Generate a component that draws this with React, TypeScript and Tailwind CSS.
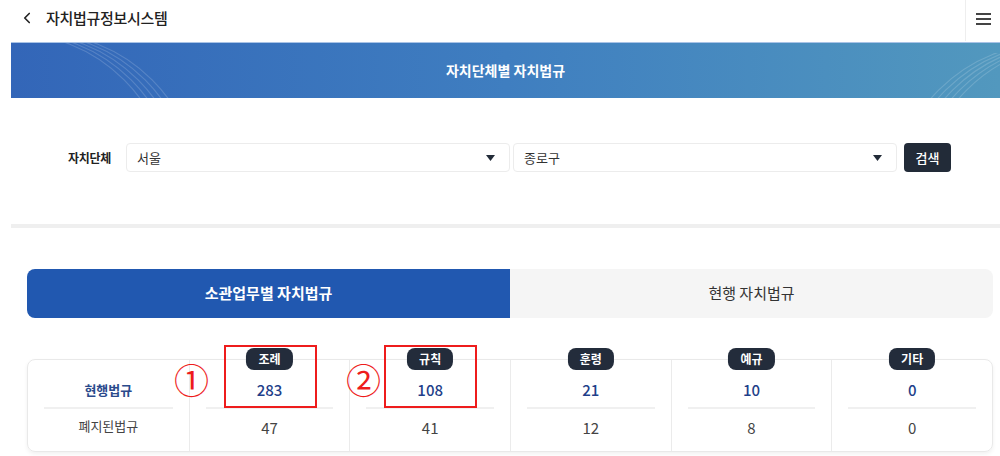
import { ChevronLeft } from "lucide-react";

const font = { fontFamily: '"Noto Sans CJK KR", "Noto Sans", sans-serif' };

const stats = [
  { name: "조례", current: 283, repealed: 47 },
  { name: "규칙", current: 108, repealed: 41 },
  { name: "훈령", current: 21, repealed: 12 },
  { name: "예규", current: 10, repealed: 8 },
  { name: "기타", current: 0, repealed: 0 },
];

function Arcs({ className }: { className: string }) {
  return (
    <svg className={className} viewBox="0 0 200 56" fill="none">
      {[0, 7, 14, 21, 28].map((d) => (
        <circle
          key={d}
          cx={-20 + d}
          cy={150}
          r={160}
          stroke="white"
          strokeOpacity="0.16"
          strokeWidth="1.2"
        />
      ))}
    </svg>
  );
}

function Select({ value }: { value: string }) {
  return (
    <div className="flex h-[29px] w-[384px] items-center justify-between rounded-[4px] border border-[#ececec] bg-white pl-[10px] pr-[14px]">
      <span className="text-[13px] text-[#333]">{value}</span>
      <svg width="9" height="6" viewBox="0 0 9 6">
        <path d="M0 0h9L4.5 6z" fill="#222b38" />
      </svg>
    </div>
  );
}

export default function App() {
  return (
    <div className="h-[456px] w-[1000px] overflow-hidden bg-white" style={font}>
      {/* Header */}
      <header className="flex h-[41px] items-stretch">
        <div className="flex flex-1 items-center pb-[5px] pl-[18px]">
          <ChevronLeft size={18} strokeWidth={2.2} className="text-[#222]" />
          <span className="ml-[10px] text-[15px] font-medium tracking-[-0.3px] text-[#222]">
            자치법규정보시스템
          </span>
        </div>
        <div className="flex w-[35px] items-center justify-center border-l border-[#eeeeee] pb-[4px]">
          <div className="flex w-[15px] flex-col gap-[3px]">
            <span className="h-[2px] bg-[#444]" />
            <span className="h-[2px] bg-[#444]" />
            <span className="h-[2px] bg-[#444]" />
          </div>
        </div>
      </header>

      <main className="ml-[11px]">
        {/* Banner */}
        <div className="relative mt-[1px] flex h-[56px] items-center justify-center overflow-hidden border-t border-[#a9c3e6] bg-gradient-to-r from-[#3366b8] via-[#3f7ec0] to-[#5298be]">
          <Arcs className="absolute left-[20px] top-0 h-[56px] w-[200px]" />
          <Arcs className="absolute right-[-60px] top-[10px] h-[56px] w-[200px] scale-x-[-1]" />
          <span className="relative text-[14px] font-bold text-white">자치단체별 자치법규</span>
        </div>

        {/* Search */}
        <div className="flex items-center pt-[45px]">
          <span className="ml-[57px] mr-[15px] w-[43px] whitespace-nowrap text-[12px] font-bold tracking-[-0.3px] text-[#222]">
            자치단체
          </span>
          <div className="flex gap-[3px]">
            <Select value="서울" />
            <Select value="종로구" />
          </div>
          <button className="ml-[7px] h-[29px] w-[47px] rounded-[4px] bg-[#222b38] text-[13px] font-medium text-white">
            검색
          </button>
        </div>

        <div className="mt-[52px] h-[4px] bg-[#efefef]" />

        {/* Tabs */}
        <div className="ml-[16px] mt-[41px] flex h-[49px] w-[966px]">
          <div className="flex flex-1 items-center justify-center rounded-l-[8px] bg-[#2158b0] text-[15px] font-bold text-white">
            소관업무별 자치법규
          </div>
          <div className="flex flex-1 items-center justify-center rounded-r-[8px] bg-[#f5f5f5] text-[15px] text-[#333]">
            현행 자치법규
          </div>
        </div>

        {/* Stats table */}
        <div className="relative ml-[16px] mt-[41px] grid w-[966px] grid-cols-6 rounded-[8px] border border-[#e9e9e9] shadow-[0_2px_4px_rgba(0,0,0,0.06)]">
          <div className="flex flex-col">
            <div className="h-[47px] pt-[21px] text-center text-[13px] font-bold leading-[18px] text-[#2a4a8c]">
              현행법규
            </div>
            <div className="mx-[16px] h-[2px] bg-[#f0f0f0]" />
            <div className="h-[42px] pt-[8px] text-center text-[13px] leading-[18px] text-[#444]">
              폐지된법규
            </div>
          </div>
          {stats.map((s) => (
            <div key={s.name} className="relative flex flex-col border-l border-[#ebebeb]">
              <span className="absolute left-1/2 top-[-12px] -translate-x-1/2 rounded-[8px] bg-[#232c3b] px-[12px] text-[12px] font-bold leading-[22px] text-white">
                {s.name}
              </span>
              <div className="h-[47px] pt-[21px] text-center text-[15px] font-medium leading-[18px] text-[#1f3f8a]">
                {s.current}
              </div>
              <div className="mx-[16px] h-[2px] bg-[#f0f0f0]" />
              <div className="h-[42px] pt-[10px] text-center text-[15px] leading-[18px] text-[#444]">
                {s.repealed}
              </div>
            </div>
          ))}

          {/* Annotations */}
          <div className="pointer-events-none absolute left-[196px] top-[-15px] h-[63px] w-[93px] border-2 border-[#ee1c1c]" />
          <div className="pointer-events-none absolute left-[356px] top-[-15px] h-[63px] w-[93px] border-2 border-[#ee1c1c]" />
          <span className="absolute left-[146px] top-[1px] text-[35px] font-normal leading-[36px] text-[#ee1c1c]">①</span>
          <span className="absolute left-[318px] top-[1px] text-[35px] font-normal leading-[36px] text-[#ee1c1c]">②</span>
        </div>
      </main>
    </div>
  );
}
